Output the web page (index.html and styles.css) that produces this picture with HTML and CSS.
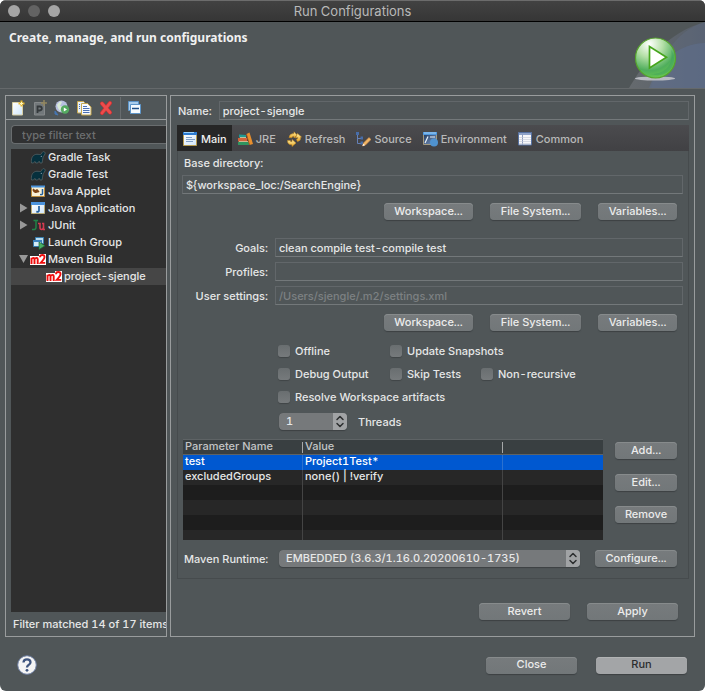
FILE: index.html
```html
<!DOCTYPE html>
<html lang="en">
<head>
<meta charset="utf-8">
<title>Run Configurations</title>
<link rel="stylesheet" href="styles.css">
</head>
<body>
<svg width="0" height="0" class="defs" aria-hidden="true">
  <defs>
    <linearGradient id="win" x1="0" y1="0" x2="1" y2="1"><stop offset="0" stop-color="#fff"/><stop offset="1" stop-color="#cfe6fb"/></linearGradient>
    <linearGradient id="gold" x1="0" y1="0" x2="0" y2="1"><stop offset="0" stop-color="#fff3a8"/><stop offset="1" stop-color="#e8a424"/></linearGradient>
    <linearGradient id="night" x1="0" y1="0" x2="1" y2="1"><stop offset="0" stop-color="#1c3358"/><stop offset="1" stop-color="#7e9cc6"/></linearGradient>
    <radialGradient id="orb" cx=".35" cy=".15" r=".95"><stop offset="0" stop-color="#fff"/><stop offset=".35" stop-color="#b5e0a8"/><stop offset=".7" stop-color="#4fae5c"/><stop offset="1" stop-color="#6fd04a"/></radialGradient>
    <linearGradient id="haze" x1="0" y1="0" x2="1" y2="0"><stop offset="0" stop-color="#777b80"/><stop offset="1" stop-color="#5b6478"/></linearGradient>
    <symbol id="gradle" viewBox="0 0 16 16">
      <path d="M1.500 14c-.6-4 .6-7.500 4-8.500 2-.6 3.500.2 5 0 1.300-.3 1.200-2 2.300-2.700 1.300-.6 2.700.5 2.300 2-.3 1.300-1.300 1.700-1.800 2.800-.6 1.500-.5 3.200-1.300 6.400h-2l-.8-1.800-1.500 1.800h-2l-.8-1.600-1.400 1.600z" fill="#06303d" stroke="#5b686b" stroke-width=".7"/>
      <path d="M3.500 12c-.2-3 1-5 3-5.500 2-.3 3 .5 5 0l-1 5.500-1.500-1.200L7.500 12.500 5 11z" fill="#06303d"/>
      <circle cx="11.300" cy="7.300" r=".6" fill="#9ab"/>
    </symbol>
    <symbol id="m2" viewBox="0 0 16 12">
      <path d="M0 3h9V1h7v11H0z" fill="#fff"/>
      <path d="M1.500 11V4.800M1.500 6Q4.300 3.800 4.500 6v5M4.500 6Q7.500 3.800 7.700 6v5" fill="none" stroke="#f00d0d" stroke-width="1.900"/>
      <path d="M10 4.300Q10 2 12.300 2t2.200 2.100Q14.500 6 10.700 9.900H15.200" fill="none" stroke="#f00d0d" stroke-width="1.900"/>
    </symbol>
    <symbol id="updown" viewBox="0 0 14 17"><path d="M4 6.500l3-3 3 3M4 10.500l3 3 3-3" fill="none" stroke="#2c2e2f" stroke-width="1.500" stroke-linecap="round" stroke-linejoin="round"/></symbol>
  </defs>
</svg>
<div class="window">
  <header class="titlebar">
    <div class="lights"><i></i><i class="dim"></i><i></i></div>
    <span>Run Configurations</span>
  </header>
  <section class="banner">
    <h1>Create, manage, and run configurations</h1>
    <svg class="art" width="76" height="66" viewBox="0 0 76 66" aria-hidden="true">
      <path d="M0 66C14 42 38 10 76 0v66z" fill="url(#haze)" opacity=".55"/>
      <path d="M22 66C28 42 46 8 76 0v66z" fill="#63708a" opacity=".3"/>
      <path d="M20 66C30 38 50 22 76 21v45z" fill="#5f7295" opacity=".45"/>
      <ellipse cx="26" cy="56.500" rx="20" ry="2" fill="#b9bbc2"/>
      <circle cx="26.500" cy="36" r="20" fill="url(#orb)" stroke="#56a32c" stroke-width="1.200"/>
      <path d="M42 28c3 14-5 24-20 24 8 3 19 0 22-9 2-5 1-11-2-15z" fill="#3f9f60" opacity=".45"/>
      <path d="M20.500 24.500V46L37.500 35.200z" fill="#fff" stroke="#46a51d" stroke-width="1.700"/>
    </svg>
  </section>
  <main class="content">
    <aside class="left panel">
      <div class="toolbar">
        <button type="button" aria-label="New"><svg width="16" height="16" viewBox="0 0 16 16"><path d="M2.500 2.500h7l3 3v9.500h-10z" fill="url(#win)" stroke="#d8cfa4"/><path d="M11.500 .5v6M8.500 3.500h6" stroke="#e9b92e" stroke-width="2"/><path d="M11.500 2v3M10 3.500h3" stroke="#fff6b8"/></svg></button>
        <button type="button" aria-label="New prototype"><svg width="16" height="16" viewBox="0 0 16 16"><path d="M2.500 2.500h10v12.500h-10z" fill="#72787b" stroke="#85898b"/><path d="M5.500 13V6.500h2.300q2 .2 2 2t-2 2H5.500" fill="none" stroke="#34393c" stroke-width="1.800"/><path d="M12 0v6M9 3h6" stroke="#92865e" stroke-width="1.500"/></svg></button>
        <button type="button" aria-label="Export"><svg width="16" height="16" viewBox="0 0 16 16"><circle cx="7.500" cy="6.500" r="6" fill="#b8bfe0"/><path d="M3 5q3-5 5-3l-2 4 4 1-3 4q-3-1-4-6z" fill="#d8ead7"/><path d="M1 11l3 4-3-1z" fill="#4675b2" stroke="#4675b2"/><circle cx="11" cy="9.500" r="4.200" fill="#55aa61"/><path d="M9.800 7.500v4l3.200-2z" fill="#fff"/></svg></button>
        <button type="button" aria-label="Duplicate"><svg width="16" height="16" viewBox="0 0 16 16"><path d="M1.500 1.500h6l2 2V13h-8z" fill="#e8f1fb" stroke="#c7a951"/><path d="M5.500 3.500h6l3.500 3.500v8H5.500z" fill="#f7faff" stroke="#c7a951"/><path d="M7 6.500h4M7 8.500h6.500M7 10.500h6.500M7 12.500h6.500M3 4.500h1M3 6.500h1M3 8.500h1" stroke="#4c71b4"/></svg></button>
        <button type="button" aria-label="Delete"><svg width="16" height="16" viewBox="0 0 16 16"><path d="M4 3.500l8 9M12 3l-8 10" stroke="#cf3032" stroke-width="4" stroke-linecap="round"/><path d="M4 3.500l8 9M12 3l-8 10" stroke="#ee4c4c" stroke-width="2.700" stroke-linecap="round"/></svg></button>
        <span class="sep"></span>
        <button type="button" aria-label="Collapse all"><svg width="16" height="16" viewBox="0 0 16 16"><path d="M1.500 1.500h10v9h-10z" fill="#a9cdec" stroke="#5d95c9"/><path d="M3.500 4.500h10v9h-10z" fill="#f5fbff" stroke="#5d95c9"/><path d="M5 8.500h7" stroke="#1f4f89" stroke-width="1.500"/></svg></button>
      </div>
      <div class="filter"><input type="text" placeholder="type filter text" aria-label="Filter"></div>
      <ul class="tree">
        <li><span class="tw"></span><svg width="16" height="16"><use href="#gradle"/></svg>Gradle Task</li>
        <li><span class="tw"></span><svg width="16" height="16"><use href="#gradle"/></svg>Gradle Test</li>
        <li><span class="tw"></span><svg width="16" height="16" viewBox="0 0 16 16"><path d="M1.500 3.500h13v10h-13z" fill="#f8f1d7" stroke="#b98a3a"/><path d="M1 2.500h14v2H1z" fill="#4b93dc"/><path d="M3 6l2 2 2-1 2 2M3 7q2 4 5 1" fill="none" stroke="#7d4415" stroke-width="1.600"/><path d="M12.500 6v4.500q0 1.500-2.500 1" fill="none" stroke="#235f9d" stroke-width="1.500"/></svg>Java Applet</li>
        <li><button class="tw" type="button" aria-label="Expand Java Application"><svg width="9" height="10" viewBox="0 0 9 10"><path d="M1 .5v9L8.500 5z" fill="#999"/></svg></button><svg width="16" height="16" viewBox="0 0 16 16"><path d="M1.500 3.500h13v10h-13z" fill="url(#win)" stroke="#b9aa75"/><path d="M1 2h14v3H1z" fill="#4b93dc"/><path d="M9 6v4.500q0 1.700-2.700 1.200" fill="none" stroke="#235f9d" stroke-width="1.700"/></svg>Java Application</li>
        <li><button class="tw" type="button" aria-label="Expand JUnit"><svg width="9" height="10" viewBox="0 0 9 10"><path d="M1 .5v9L8.500 5z" fill="#999"/></svg></button><svg width="16" height="16" viewBox="0 0 16 16"><path d="M3.500 3.500h4.500M6 3.500v7q0 2.500-4 2" fill="none" stroke="#218447" stroke-width="1.500"/><path d="M8 6.500h2v4q0 2 1.500 2t2-2v-4M12 6.500h1.500v6H15" fill="none" stroke="#d33a50" stroke-width="1.600"/></svg>JUnit</li>
        <li><span class="tw"></span><svg width="16" height="16" viewBox="0 0 16 16"><path d="M5.500 3.500h8v6h-8z" fill="#b9ddf1" stroke="#377dae"/><path d="M3.500 6.500h8v6h-8z" fill="#d3ecf8" stroke="#377dae"/><path d="M3 6h9v2H3z" fill="#3d83bd"/><path d="M9 8v7.500l6-3.700z" fill="#4aaf65" stroke="#1d6939" stroke-width=".7"/></svg>Launch Group</li>
        <li><button class="tw" type="button" aria-label="Collapse Maven Build"><svg width="9" height="10" viewBox="0 0 9 10"><path d="M0 1h9L4.500 9z" fill="#999"/></svg></button><svg width="16" height="12"><use href="#m2"/></svg>Maven Build</li>
        <li class="child selected"><svg width="16" height="12"><use href="#m2"/></svg>project-sjengle</li>
      </ul>
      <p class="status">Filter matched 14 of 17 items</p>
    </aside>
    <form class="right panel">
      <div class="name"><label for="name">Name:</label><input class="field" id="name" type="text" value="project-sjengle"></div>
      <div class="tabs" role="tablist">
        <button type="button" role="tab" aria-selected="true"><svg width="16" height="16" viewBox="0 0 16 16"><path d="M1.500 2h13v12.500h-13z" fill="url(#win)" stroke="#b79c50"/><path d="M1 1h14v3H1z" fill="#2c7bd0"/><path d="M2 1.500h10" stroke="#9ad1fa"/><path d="M4 6.500h6M4 8.500h9M4 10.500h7" stroke="#7fa0c8"/></svg>Main</button>
        <button type="button" role="tab"><svg width="16" height="16" viewBox="0 0 16 16"><path d="M2 3.500l7 .5v3l-7-.5z" fill="#1f9a94"/><path d="M1 7h9v3.500H1z" fill="#d0623a"/><path d="M1 11h11v3H1z" fill="#2f9460"/><path d="M2 10.500h9M3 6.500h6" stroke="#e2d2a5" stroke-width=".8"/><path d="M9.500 3l3-1.500L16 13l-3.500 1z" fill="#e88f2e"/><path d="M9.500 3L12.500 14" stroke="#a5581c" stroke-width=".8"/></svg>JRE</button>
        <button type="button" role="tab"><svg width="16" height="16" viewBox="0 0 16 16"><g fill="url(#gold)" stroke="#c58a24" stroke-width=".6"><path d="M1.500 9.500Q1.500 14 6 13.800V15.500L10 12 6 8.500v2.200Q4 10.800 4.300 9.500z"/><path d="M14.500 6.500Q15 10 11.500 10.500L10.500 8.500Q12 8 11.800 6.500L9.500 7 11.500 2.500 15.500 6z"/><path d="M3 6.500Q3.500 2.500 8 2.500V.8L11 4 8 7V5.300Q6 5.300 5.800 6.800z"/></g></svg>Refresh</button>
        <button type="button" role="tab"><svg width="16" height="16" viewBox="0 0 16 16"><path d="M2.500 3v9.500H6M2.500 7.500H6" fill="none" stroke="#6480b8"/><path d="M1 1h3v3H1zM5.500 5.500h2.500v3h-2.500zM5.500 10.500h2.500v3h-2.500z" fill="#476da9"/><path d="M7.500 15l1-3 5.500-5.500 2 2L10.500 14z" fill="#f0b668" stroke="#d58b45" stroke-width=".6"/><path d="M7.500 15l2.500-.8-1.500-1.500z" fill="#fff"/></svg>Source</button>
        <button type="button" role="tab"><svg width="16" height="16" viewBox="0 0 16 16"><path d="M1.500 2h13v11.500h-13z" fill="url(#night)" stroke="#a39a80"/><path d="M1 1h14v3H1z" fill="#4f97dd"/><path d="M2 2h12" stroke="#a6d3f8"/><path d="M6 5.500L3 12M8 6h5" fill="none" stroke="#e9f2fa" stroke-width="1.200"/><circle cx="12" cy="11.500" r="4" fill="#4f92cf"/></svg>Environment</button>
        <button type="button" role="tab"><svg width="16" height="16" viewBox="0 0 16 16"><path d="M1.500 1.500h13v12.500h-13z" fill="#f7f7fa" stroke="#5670a0"/><path d="M2 2h12v2H2z" fill="#8fa3c9"/><path d="M5.500 3v11" stroke="#8d9dbf"/><path d="M2 6.500h12M2 8.500h12M2 10.500h12M2 12.500h12" stroke="#c3c9d7" stroke-width=".6"/></svg>Common</button>
      </div>
      <div class="page" role="tabpanel">
        <label class="base" for="base">Base directory:</label>
        <input class="field" id="base" type="text" value="${workspace_loc:/SearchEngine}">
        <div class="picks"><button class="btn w89" type="button">Workspace...</button><button class="btn w91" type="button">File System...</button><button class="btn w79" type="button">Variables...</button></div>
        <div class="fields">
          <label for="goals">Goals:</label><input class="field" id="goals" type="text" value="clean compile test-compile test">
          <label for="profiles">Profiles:</label><input class="field" id="profiles" type="text">
          <label for="settings">User settings:</label><input class="field" id="settings" type="text" placeholder="/Users/sjengle/.m2/settings.xml">
        </div>
        <div class="picks"><button class="btn w89" type="button">Workspace...</button><button class="btn w91" type="button">File System...</button><button class="btn w79" type="button">Variables...</button></div>
        <div class="checks">
          <label><input type="checkbox">Offline</label>
          <label class="wide"><input type="checkbox">Update Snapshots</label>
          <label><input type="checkbox">Debug Output</label>
          <label><input type="checkbox">Skip Tests</label>
          <label><input type="checkbox">Non-recursive</label>
          <label class="full"><input type="checkbox">Resolve Workspace artifacts</label>
        </div>
        <div class="threads">
          <span class="pick"><select id="threads"><option>1</option><option>2</option></select><svg width="14" height="17"><use href="#updown"/></svg></span>
          <label for="threads">Threads</label>
        </div>
        <div class="params">
          <div class="tablebox">
            <table>
              <thead><tr><th class="c1">Parameter Name</th><th class="c2">Value</th><th></th></tr></thead>
              <tbody>
                <tr class="selected"><td>test</td><td>Project1Test*</td><td></td></tr>
                <tr><td>excludedGroups</td><td>none() | !verify</td><td></td></tr>
                <tr><td></td><td></td><td></td></tr>
                <tr><td></td><td></td><td></td></tr>
                <tr><td></td><td></td><td></td></tr>
                <tr><td></td><td></td><td></td></tr>
              </tbody>
            </table>
          </div>
          <div class="side"><button class="btn" type="button">Add...</button><button class="btn" type="button">Edit...</button><button class="btn" type="button">Remove</button></div>
        </div>
        <div class="runtime">
          <label for="runtime">Maven Runtime:</label>
          <span class="pick"><select id="runtime"><option>EMBEDDED (3.6.3/1.16.0.20200610-1735)</option></select><svg width="14" height="17"><use href="#updown"/></svg></span>
          <button class="btn" type="button">Configure...</button>
        </div>
      </div>
      <div class="apply"><button class="btn w91" type="button">Revert</button><button class="btn w91" type="button">Apply</button></div>
    </form>
  </main>
  <footer>
    <button class="help" type="button" aria-label="Help"><svg width="20" height="20" viewBox="0 0 20 20"><circle cx="10" cy="10" r="9.300" fill="#f4f4f4" stroke="#6a7ba0"/><path d="M6.500 7.500Q6.600 4.300 10 4.300t3.500 2.900Q13.500 9 11.300 10.200 10 11 10 12.600" fill="none" stroke="#3f557f" stroke-width="2.300"/><circle cx="10" cy="15.300" r="1.400" fill="#3f557f"/></svg></button>
    <button class="btn w91" type="button">Close</button><button class="btn w91 primary" type="button">Run</button>
  </footer>
</div>
</body>
</html>
```
FILE: styles.css
```css
* { box-sizing: border-box; }
body { margin: 0; background: #fff; font: 500 11px/14px Inter, "Liberation Sans", sans-serif; font-variant-numeric: tabular-nums; color: #e6e7e7; }
button, input, select { font: inherit; font-variant-numeric: inherit; color: inherit; margin: 0; }
button { background: none; border: 0; padding: 0; }
svg { display: block; flex: none; }
.defs { position: absolute; }

.window { min-height: 100vh; display: flex; flex-direction: column; background: #505658; border-radius: 6px; overflow: hidden; }
.titlebar { position: relative; height: 22px; display: flex; align-items: center; justify-content: center; background: linear-gradient(#424242, #363636); border-top: 1px solid #6c6c6c; border-bottom: 1px solid #000; color: #b9b9b9; font-size: 13px; font-weight: 400; }
.lights { position: absolute; left: 8px; display: flex; gap: 8px; }
.lights i { width: 12px; height: 12px; border-radius: 50%; background: #a5a5a5; }
.lights .dim { background: #636363; }
.banner { position: relative; height: 67px; border-bottom: 1px solid #65696b; }
h1 { margin: 0; padding: 8px 9px; font: bold 12px/16px "Noto Sans", "Open Sans", sans-serif; color: #f1f1f1; }
.art { position: absolute; right: 0; top: 0; }

.content { flex: 1; display: flex; gap: 3px; padding: 6px 10px 0 5px; }
.panel { border: 1px solid #999c9d; }
.left { width: 162px; flex: none; display: flex; flex-direction: column; overflow: hidden; }
.toolbar { height: 24px; display: flex; align-items: center; gap: 6px; padding: 0 4px; border-bottom: 1px solid #999c9d; }
.sep { width: 1px; height: 22px; background: #676c6e; }
.filter { padding: 5px 0 5px 5px; }
.filter input { display: block; width: 100%; height: 19px; padding: 0 10px; background: #303132; border: 1px solid #696d6f; border-right: 0; border-radius: 4px 0 0 4px; }
.filter input::placeholder { color: #6d6f70; opacity: 1; }
.tree { flex: 1; margin: 0 0 0 5px; padding: 0; list-style: none; background: #2f2f2f; }
.tree li { height: 17px; display: flex; align-items: center; gap: 2px; padding: 0 0 2px 8px; white-space: nowrap; }
.tree .child { padding-left: 35px; }
.tree .selected { background: #464646; }
.tw { width: 9px; flex: none; }
.status { margin: 0; padding: 5px 0 5px 7px; white-space: nowrap; }

.right { flex: 1; min-width: 0; padding: 5px 5px 16px 6px; }
.name { display: flex; align-items: center; gap: 7px; padding-left: 1px; }
.field { display: block; width: 100%; min-width: 0; height: 19px; padding: 1px 3px 0; background: #505658; border: 1px solid #62676a; border-bottom-color: #73787a; border-radius: 0; outline: 0; }
.field::placeholder { color: #7d8183; opacity: 1; }
.tabs { display: flex; height: 26px; margin-top: 5px; background: linear-gradient(#4b4b4e, #414144); color: #b9b9b9; }
.tabs button { display: flex; align-items: center; gap: 3px; padding: 2px 5px 0; }
.tabs [aria-selected] { background: #262626; color: #f0f0f0; }
.page { border: 1px solid #464b4d; border-top: 0; padding: 5px 5px 11px 4px; }
.base { display: block; padding: 0 2px 5px; }
.picks { display: flex; justify-content: flex-end; gap: 17px; margin-top: 9px; padding-right: 6px; }
.btn { height: 17px; padding-bottom: 2px; border-radius: 4px; background: linear-gradient(#777b7d, #727779); box-shadow: inset 0 1px #878b8c, 0 1px 1px #3c4143; text-align: center; color: #ececec; }
.primary { background: #a3a5a7; color: #2b2d2e; box-shadow: inset 0 1px #b1b3b4, 0 1px 1px #3c4143; }
.w79 { width: 79px; }
.w89 { width: 89px; }
.w91 { width: 91px; }
.fields { display: grid; grid-template-columns: 86px 1fr; gap: 5px 7px; align-items: center; margin-top: 18px; }
.fields label { text-align: right; }
.checks { display: grid; grid-template-columns: 112px 91px 1fr; row-gap: 9px; margin: 13px 0 9px; padding-left: 96px; }
.checks label { display: flex; align-items: center; gap: 5px; }
.wide { grid-column: span 2; }
.full { grid-column: 1 / -1; }
.checks input { appearance: none; width: 12px; height: 12px; border-radius: 3px; background: linear-gradient(#696e70, #767a7c); box-shadow: 0 1px 1px #404547; }
.threads { display: flex; align-items: center; gap: 11px; padding-left: 97px; }
.threads .pick { width: 68px; }
.pick { position: relative; display: block; height: 17px; border-radius: 4px; overflow: hidden; box-shadow: 0 1px 1px #3c4143; }
.pick select { appearance: none; display: block; width: 100%; height: 17px; padding: 0 16px 2px 7px; border: 0; background: #76797b; border-radius: 4px; }
.pick svg { position: absolute; right: 0; top: 0; background: #a1a3a5; pointer-events: none; }
.params { display: flex; gap: 12px; margin-top: 9px; padding: 0 6px 0 1px; }
.tablebox { flex: 1; height: 101px; overflow: hidden; }
table { width: 100%; table-layout: fixed; border-spacing: 0; background: #1d1d1d; }
th, td { height: 15px; padding: 0 2px 2px; text-align: left; font-weight: 500; line-height: 13px; white-space: nowrap; }
td + td { border-left: 1px solid #444; }
th { height: 16px; padding-bottom: 1px; background: #393f41; color: #c3c5c6; border-top: 1px solid #5e6365; border-bottom: 1px solid #5e6365; }
th + th { background: linear-gradient(#a6a8a9, #a6a8a9) 0 2px / 1px 11px no-repeat #393f41; padding-left: 3px; }
.c1 { width: 119px; }
.c2 { width: 200px; }
tbody tr:nth-child(even) { background: #272727; }
tbody .selected { background: #0058d0; color: #fff; }
tbody .selected td + td { border-color: #2b71cf; }
.side { display: flex; flex-direction: column; gap: 15px; width: 62px; padding-top: 3px; }
.runtime { display: grid; grid-template-columns: 86px 1fr 82px; align-items: center; margin-top: 10px; padding: 0 6px 0 2px; }
.runtime .pick { margin: 0 15px 0 9px; }
.apply { display: flex; justify-content: flex-end; gap: 17px; margin-top: 24px; padding-right: 11px; }

footer { display: flex; align-items: center; gap: 19px; padding: 18px 18px 16px 17px; }
.help { margin-right: auto; }
```
